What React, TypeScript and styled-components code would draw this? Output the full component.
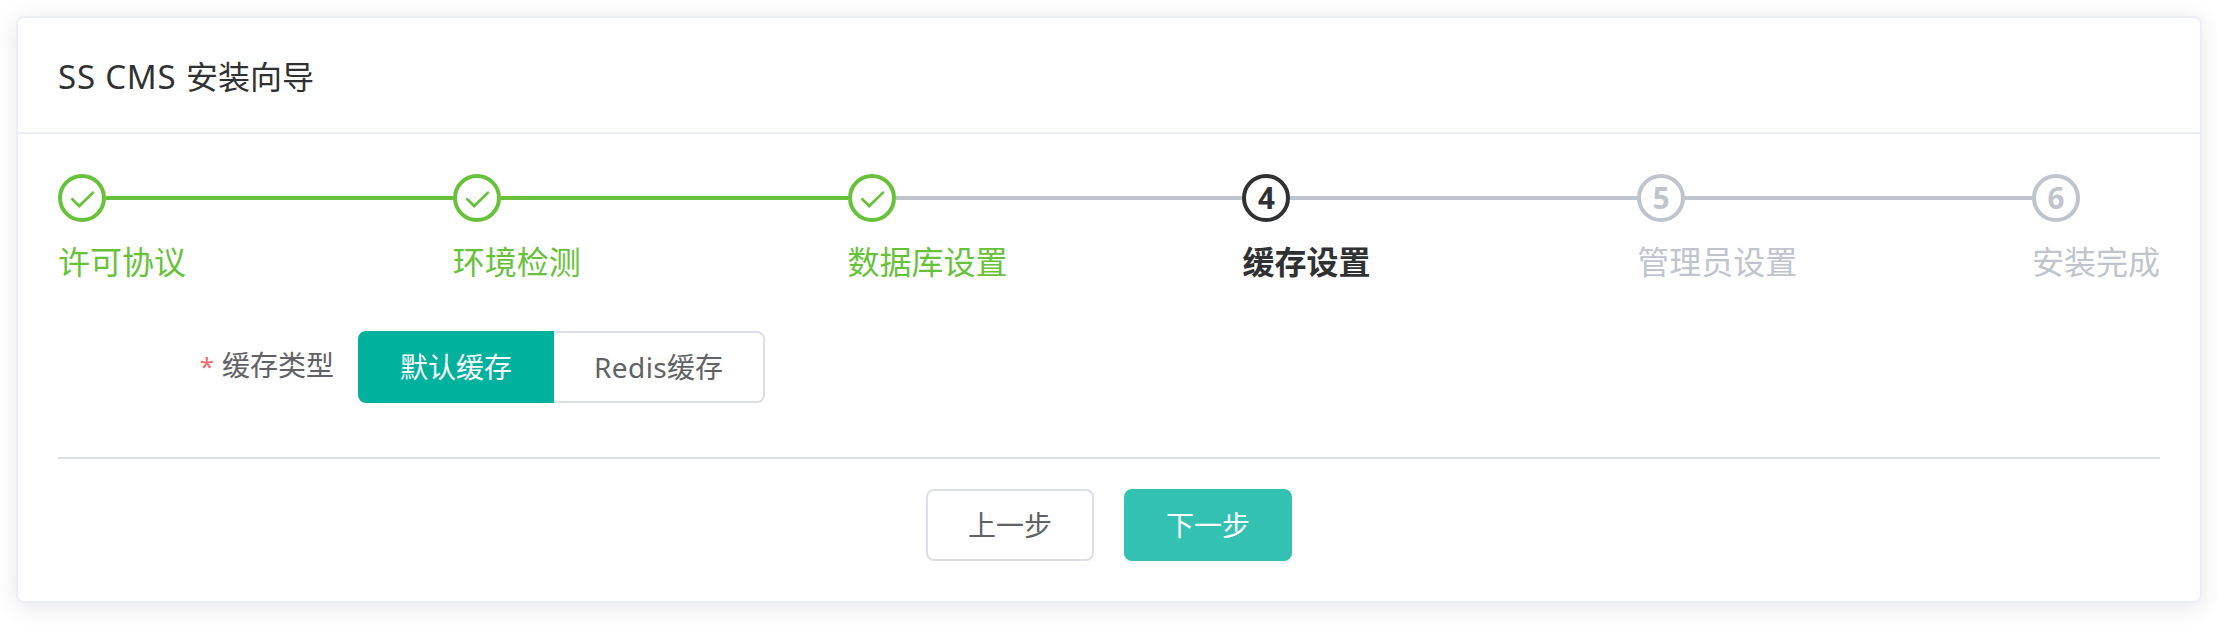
import React from "react";
import styled, { createGlobalStyle, css } from "styled-components";

type Status = "done" | "active" | "wait";

const colors: Record<Status, string> = {
  done: "#67c23a",
  active: "#303133",
  wait: "#c0c4cc",
};

const GlobalStyle = createGlobalStyle`
  * { box-sizing: border-box; }
  body {
    margin: 0;
    background: #fff;
    font-family: "Noto Sans", "Noto Sans CJK SC", sans-serif;
    color: #303133;
  }
`;

const Page = styled.main`
  min-height: 630px;
  padding: 16px;
`;

const Card = styled.section`
  height: 587px;
  border: 2px solid #ebeef5;
  border-radius: 8px;
  background: #fff;
  box-shadow: 0 4px 24px rgba(0, 0, 0, 0.1);
`;

const CardHeader = styled.header`
  height: 116px;
  padding: 37px 40px 35px;
  border-bottom: 2px solid #ebeef5;
  font-size: 32px;
  line-height: 44px;
`;

const Latin = styled.span<{ $spacing: number; $size?: number }>`
  font-size: ${(p) => (p.$size ? `${p.$size}px` : "inherit")};
  letter-spacing: ${(p) => p.$spacing}px;
`;

const CardBody = styled.div`
  padding: 40px;
`;

const Steps = styled.ol`
  display: flex;
  margin: 0;
  padding: 0;
  list-style: none;
`;

const StepItem = styled.li<{ $status: Status }>`
  flex: 1 1 0;
  color: ${(p) => colors[p.$status]};
  font-weight: ${(p) => (p.$status === "active" ? 700 : 400)};

  &:last-child {
    flex: 0 0 128px;
  }
`;

const StepHead = styled.div`
  display: flex;
  align-items: center;
  height: 48px;
`;

const StepIcon = styled.div`
  display: flex;
  flex: 0 0 48px;
  align-items: center;
  justify-content: center;
  height: 48px;
  border: 4px solid currentColor;
  border-radius: 50%;
  font-size: 29.5px;
  font-weight: 700;
  line-height: 40px;
`;

const StepLine = styled.div<{ $done: boolean }>`
  flex: 1;
  height: 4px;
  background: ${(p) => (p.$done ? colors.done : colors.wait)};
`;

const StepTitle = styled.div`
  height: 76px;
  font-size: 32px;
  line-height: 79px;
  white-space: nowrap;
`;

const FormItem = styled.div`
  display: flex;
  align-items: flex-start;
  height: 135px;
  padding-top: 33px;
  font-size: 28px;
`;

const Label = styled.label`
  width: 300px;
  padding-right: 24px;
  color: #606266;
  line-height: 68px;
  text-align: right;
`;

const Required = styled.span`
  margin-right: 8px;
  color: #f56c6c;
  font-size: 26px;
`;

const RadioGroup = styled.div`
  display: flex;
`;

const RadioButton = styled.button<{ $checked?: boolean }>`
  height: 72px;
  padding: 1px 40px 0;
  border: 2px solid #dcdfe6;
  border-left-width: 0;
  border-radius: 0 8px 8px 0;
  background: #fff;
  color: #606266;
  font: inherit;
  line-height: 67px;
  white-space: nowrap;

  ${(p) =>
    p.$checked &&
    css`
      border: 2px solid #00b19d;
      border-radius: 8px 0 0 8px;
      background: #00b19d;
      color: #fff;
    `}
`;

const Divider = styled.hr`
  height: 2px;
  margin: 24px 0 30px;
  border: 0;
  background: #dcdfe6;
`;

const Actions = styled.div`
  display: flex;
  justify-content: center;
  gap: 30px;
`;

const Button = styled.button<{ $primary?: boolean }>`
  width: 168px;
  height: 72px;
  padding: 0;
  border: 2px solid ${(p) => (p.$primary ? "#33c1b1" : "#dcdfe6")};
  border-radius: 8px;
  background: ${(p) => (p.$primary ? "#33c1b1" : "#fff")};
  color: ${(p) => (p.$primary ? "#fff" : "#606266")};
  font: inherit;
  font-size: 28px;
  line-height: 68px;
`;

const Check = () => (
  <svg width="40" height="40" viewBox="0 0 40 40" fill="none">
    <path
      d="M10.3 21.2 17.2 28 31 14.6"
      stroke="currentColor"
      strokeWidth="2.7"
      strokeLinecap="round"
      strokeLinejoin="miter"
    />
  </svg>
);

const steps: { title: string; status: Status }[] = [
  { title: "许可协议", status: "done" },
  { title: "环境检测", status: "done" },
  { title: "数据库设置", status: "done" },
  { title: "缓存设置", status: "active" },
  { title: "管理员设置", status: "wait" },
  { title: "安装完成", status: "wait" },
];

export default function App() {
  return (
    <Page>
      <GlobalStyle />
      <Card>
        <CardHeader>
          <Latin $spacing={0.8} $size={33}>SS CMS </Latin>安装向导
        </CardHeader>
        <CardBody>
          <Steps>
            {steps.map((step, i) => (
              <StepItem key={step.title} $status={step.status}>
                <StepHead>
                  <StepIcon>{step.status === "done" ? <Check /> : i + 1}</StepIcon>
                  {i < steps.length - 1 && (
                    <StepLine
                      $done={step.status === "done" && steps[i + 1].status === "done"}
                    />
                  )}
                </StepHead>
                <StepTitle>{step.title}</StepTitle>
              </StepItem>
            ))}
          </Steps>
          <FormItem>
            <Label>
              <Required>*</Required>缓存类型
            </Label>
            <RadioGroup>
              <RadioButton $checked>默认缓存</RadioButton>
              <RadioButton>
                <Latin $spacing={0.4}>Redis</Latin>缓存
              </RadioButton>
            </RadioGroup>
          </FormItem>
          <Divider />
          <Actions>
            <Button>上一步</Button>
            <Button $primary>下一步</Button>
          </Actions>
        </CardBody>
      </Card>
    </Page>
  );
}
